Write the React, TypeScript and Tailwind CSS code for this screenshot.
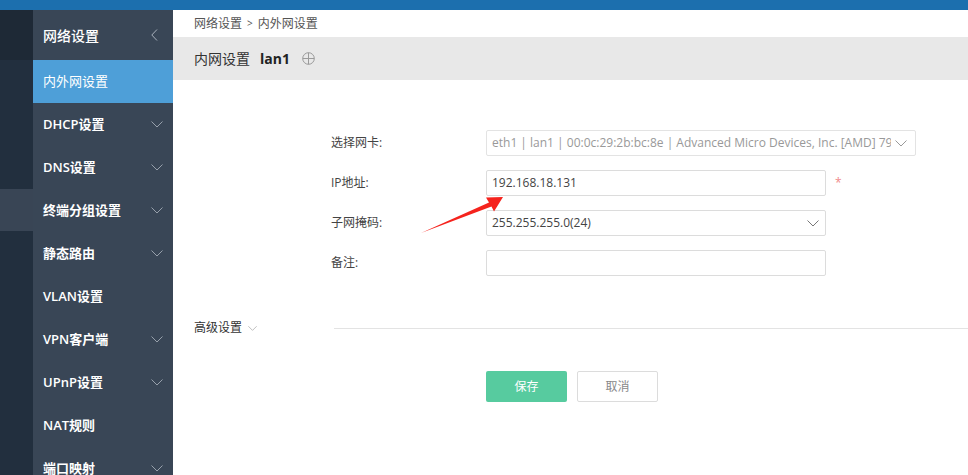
import React from 'react';

const font = { fontFamily: '"Open Sans", "Noto Sans CJK SC", sans-serif' };

const ChevronDown = ({ className = '' }: { className?: string }) => (
  <svg width="12" height="7" viewBox="0 0 12 7" className={className} fill="none">
    <path d="M0.5 0.5 L6 6 L11.5 0.5" stroke="currentColor" strokeWidth="1" />
  </svg>
);

const MENU = [
  { label: 'DHCP设置', sub: true },
  { label: 'DNS设置', sub: true },
  { label: '终端分组设置', sub: true },
  { label: '静态路由', sub: true },
  { label: 'VLAN设置', sub: false },
  { label: 'VPN客户端', sub: true },
  { label: 'UPnP设置', sub: true },
  { label: 'NAT规则', sub: false },
  { label: '端口映射', sub: true },
];

const App: React.FC = () => {
  return (
    <div className="relative w-[968px] h-[475px] overflow-hidden flex flex-col bg-white" style={font}>
      <div className="h-[10px] bg-[#1c6fae] shrink-0" />
      <div className="flex flex-1 min-h-0">
        {/* outer icon strip */}
        <div className="w-[33px] flex flex-col shrink-0">
          <div className="h-[50px] shrink-0 bg-[#1e2936]" />
          <div className="h-[129px] shrink-0 bg-[#222f3e]" />
          <div className="h-[42px] shrink-0 bg-[#394555]" />
          <div className="flex-1 bg-[#222f3e]" />
        </div>

        {/* menu */}
        <div className="w-[140px] bg-[#394656] flex flex-col shrink-0 overflow-hidden">
          <div className="h-[50px] shrink-0 flex items-center justify-between pl-[10px] pr-[15px] text-white text-[14px] font-medium">
            <span>网络设置</span>
            <svg width="7" height="12" viewBox="0 0 7 12" fill="none" className="text-[#a9b1bc]">
              <path d="M6 0.5 L0.8 6 L6 11.5" stroke="currentColor" strokeWidth="1" />
            </svg>
          </div>
          <div className="h-[43px] shrink-0 flex items-center pl-[10px] bg-[#4e9fd8] text-white text-[13px]">内外网设置</div>
          {MENU.map(item => (
            <div key={item.label} className="h-[43px] shrink-0 flex items-center justify-between pl-[10px] pr-[10px] text-white text-[13px] font-semibold">
              <span>{item.label}</span>
              {item.sub && <ChevronDown className="text-[#97a0ab]" />}
            </div>
          ))}
        </div>

        {/* main content */}
        <div className="flex-1 flex flex-col min-w-0">
          <div className="h-[27px] shrink-0 flex items-center pl-[21px] text-[12px] text-[#555]">
            网络设置 <span className="mx-[5px] text-[10px]">&gt;</span> 内外网设置
          </div>
          <div className="h-[43px] shrink-0 bg-[#e8e8e8] flex items-center pl-[21px] text-[14px] text-[#333]">
            <span>内网设置</span>
            <span className="ml-[10px] font-bold text-[#222]">lan1</span>
            <svg width="13" height="13" viewBox="0 0 13 13" fill="none" className="ml-[12px] text-[#9a9a9a]">
              <circle cx="6.5" cy="6.5" r="5.8" stroke="currentColor" strokeWidth="1" />
              <path d="M6.5 0.7 V12.3 M0.7 6.5 H12.3" stroke="currentColor" strokeWidth="1" />
            </svg>
          </div>

          <div className="pt-[50px] pl-[158px] flex flex-col gap-[14px] text-[12px]">
            <div className="flex items-center h-[26px]">
              <span className="w-[155px] text-[#444]">选择网卡:</span>
              <div className="w-[430px] h-[26px] border border-[#e3e3e3] rounded-[2px] flex items-center justify-between pl-[5px] pr-[8px] text-[#999] whitespace-nowrap overflow-hidden">
                <span className="overflow-hidden">eth1 | lan1 | 00:0c:29:2b:bc:8e | Advanced Micro Devices, Inc. [AMD] 79</span>
                <ChevronDown className="text-[#999] shrink-0 ml-[4px]" />
              </div>
            </div>
            <div className="flex items-center h-[26px]">
              <span className="w-[155px] text-[#444]">IP地址:</span>
              <div className="w-[340px] h-[26px] border border-[#dcdcdc] rounded-[2px] flex items-center pl-[5px] text-[#444]">192.168.18.131</div>
              <span className="ml-[9px] text-[#f08a8a] text-[12px]">*</span>
            </div>
            <div className="flex items-center h-[26px]">
              <span className="w-[155px] text-[#444]">子网掩码:</span>
              <div className="w-[340px] h-[26px] border border-[#dcdcdc] rounded-[2px] flex items-center justify-between pl-[5px] pr-[6px] text-[#444]">
                <span>255.255.255.0(24)</span>
                <ChevronDown className="text-[#777]" />
              </div>
            </div>
            <div className="flex items-center h-[26px]">
              <span className="w-[155px] text-[#444]">备注:</span>
              <div className="w-[340px] h-[26px] border border-[#dcdcdc] rounded-[2px]" />
            </div>
          </div>

          <div className="mt-[40px] flex items-center pl-[21px] h-[24px]">
            <span className="text-[12px] text-[#333]">高级设置</span>
            <ChevronDown className="ml-[6px] w-[9px] text-[#aaa]" />
            <div className="flex-1 ml-[77px] border-t border-[#e3e3e3]" />
          </div>

          <div className="mt-[31px] pl-[313px] flex gap-[10px]">
            <button className="w-[81px] h-[31px] rounded-[2px] bg-[#57cb9f] text-white text-[12px]">保存</button>
            <button className="w-[81px] h-[31px] rounded-[2px] border border-[#dcdcdc] bg-white text-[#888] text-[12px]">取消</button>
          </div>
        </div>
      </div>

      {/* annotation arrow */}
      <svg className="absolute left-0 top-0 pointer-events-none" width="968" height="475">
        <polygon points="421,233 489,202.5 486,197.5 503,197 494,211.5 491.5,206.5" fill="#f5231d" />
      </svg>
    </div>
  );
};

export default App;
